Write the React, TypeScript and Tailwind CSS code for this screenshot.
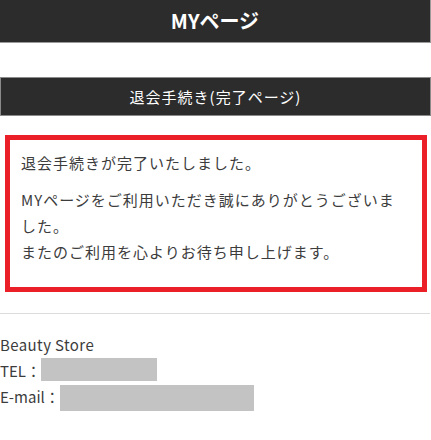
export default function App() {
  return (
    <div className="w-[431px] min-h-[440px] bg-white text-[#3c3c3c] font-['Noto_Sans_CJK_JP','Noto_Sans',sans-serif]">
      {/* Header */}
      <header className="h-[43px] w-[431px] flex items-center justify-center bg-[#2c2c2c] border-r border-b border-[#9a9a9a]">
        <h1 className="text-white text-[20px] font-bold leading-none">MYページ</h1>
      </header>

      <main className="pt-[34px]">
        <h2 className="h-[39px] w-[431px] flex items-center justify-center bg-[#2c2c2c] border border-[#8a8a8a] text-white text-[15px] leading-none tracking-[1px]">
          退会手続き(完了ページ)
        </h2>

        {/* Message */}
        <div className="mt-[19px] ml-[5px] w-[422px] border-[5px] border-[#ea1f27] pl-[11px] pr-[12px] pt-[10px] pb-[11px] text-[15px] leading-[26px] tracking-[1px]">
          <p className="mb-[11px]">退会手続きが完了いたしました。</p>
          <p className="mb-[11px]">
            MYページをご利用いただき誠にありがとうございました。
            <br />
            またのご利用を心よりお待ち申し上げます。
          </p>
        </div>

        <hr className="mt-[21px] w-[430px] border-0 border-t border-[#dcdcdc]" />

        {/* Footer */}
        <footer className="pt-[18px] text-[15px] leading-[26px]">
          <p className="tracking-[0.4px]">Beauty Store</p>
          <p className="flex items-start h-[26px]">
            TEL：<span className="inline-block w-[116px] h-[23px] bg-[#c3c3c3]" />
          </p>
          <p className="flex items-start h-[26px]">
            E-mail：<span className="inline-block w-[194px] h-[26px] bg-[#c3c3c3] mt-[1px]" />
          </p>
        </footer>
      </main>
    </div>
  );
}
